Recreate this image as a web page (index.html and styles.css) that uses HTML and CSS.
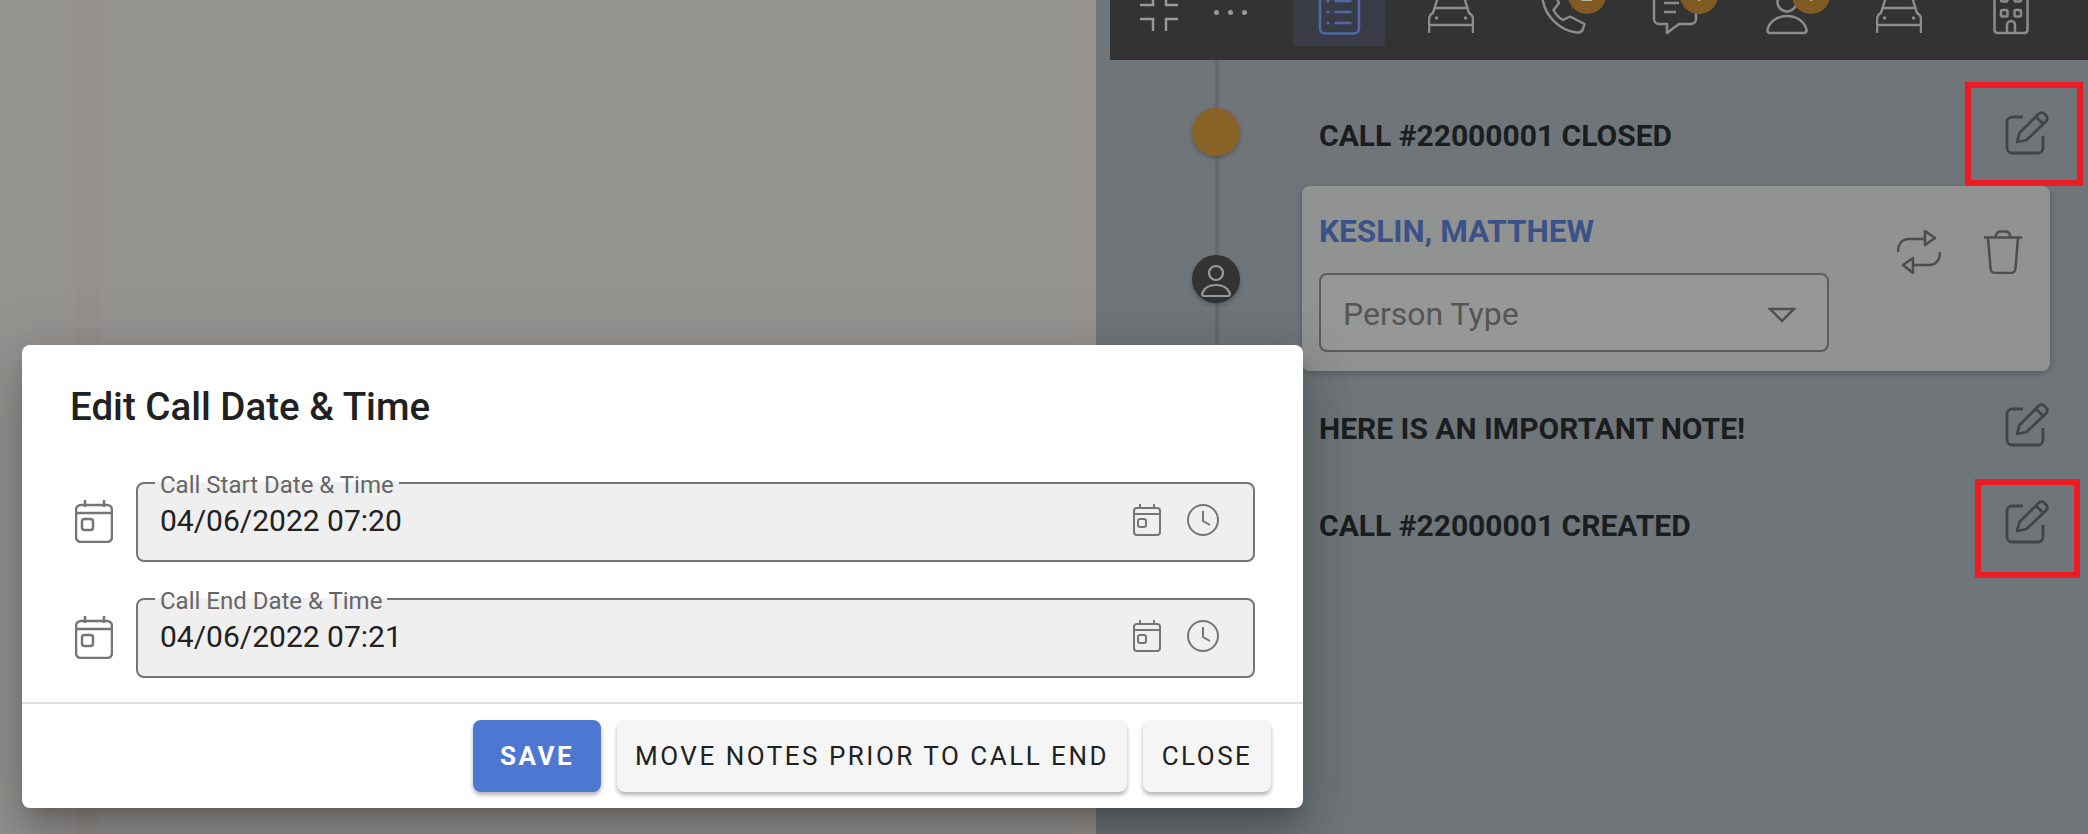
FILE: index.html
```html
<!DOCTYPE html>
<html lang="en">
<head>
  <meta charset="UTF-8" />
  <title>Edit Call Date &amp; Time</title>
  <link rel="stylesheet" href="styles.css">
</head>

<body>
  <div class="page">
    <div class="map-pane"></div>

    <div class="side-panel">
      <!-- Toolbar, scrolled so the tops of the icons are cut off -->
      <div class="toolbar">
        <svg class="tool-compress" width="38" height="48" viewBox="0 0 38 48">
          <path d="M0 5H13V0M38 5H26V0M0 19H13V31M38 19H26V31" />
        </svg>
        <div class="tool-dots"><span></span><span></span><span></span></div>
        <div class="tabs">
          <div class="tab active">
            <svg class="icon" width="46" height="48" viewBox="0 0 46 48">
              <rect x="4" y="2" width="39" height="44.5" rx="5" />
              <path d="M18.5 14H35.5M18.5 25H35.5M18.5 36H35.5" />
              <circle class="solid" cx="12" cy="14" r="1.6" />
              <circle class="solid" cx="12" cy="25" r="1.6" />
              <circle class="solid" cx="12" cy="36" r="1.6" />
            </svg>
          </div>
          <div class="tab">
            <svg class="icon" width="46" height="48" viewBox="0 0 46 48">
              <path d="M1 46V32a7 7 0 0 1 4-6L10 10a5 5 0 0 1 5-4H31a5 5 0 0 1 5 4L41 26a7 7 0 0 1 4 6V46M7 21H39M1 38H45" />
              <circle class="solid" cx="8.5" cy="31" r="1.7" />
              <circle class="solid" cx="37.5" cy="31" r="1.7" />
            </svg>
          </div>
          <div class="tab">
            <svg class="icon" width="46" height="48" viewBox="0 0 46 48">
              <path d="M10 3L5 5C2 7 2 11 3 14C6 30 20 43 36 45.5C40 46 42 45 43 42L44.5 37L30 29.5L23 33C19 31 16 28 13.5 23L19 16L13 3Z" />
            </svg>
            <span class="badge">2</span>
          </div>
          <div class="tab">
            <svg class="icon" width="46" height="48" viewBox="0 0 46 48">
              <path d="M8 2H38a6 6 0 0 1 6 6V32a5 5 0 0 1-5 5H27L15 46V37H7a5 5 0 0 1-5-5V8a6 6 0 0 1 6-6M12 16H27M12 25H24" />
            </svg>
            <span class="badge">1</span>
          </div>
          <div class="tab">
            <svg class="icon" width="46" height="48" viewBox="0 0 46 48">
              <circle cx="23" cy="15" r="9.5" />
              <path d="M6 46H40a2.500 2.500 0 0 0 2.500-3C41 35 33 29 23 29S5 35 3.500 43A2.500 2.500 0 0 0 6 46Z" />
            </svg>
            <span class="badge">1</span>
          </div>
          <div class="tab">
            <svg class="icon" width="46" height="48" viewBox="0 0 46 48">
              <path d="M1 46V32a7 7 0 0 1 4-6L10 10a5 5 0 0 1 5-4H31a5 5 0 0 1 5 4L41 26a7 7 0 0 1 4 6V46M7 21H39M1 38H45" />
              <circle class="solid" cx="8.5" cy="31" r="1.7" />
              <circle class="solid" cx="37.5" cy="31" r="1.7" />
            </svg>
          </div>
          <div class="tab">
            <svg class="icon" width="46" height="48" viewBox="0 0 46 48">
              <path d="M10 2H36a3.500 3.500 0 0 1 3.500 3.500V43a3 3 0 0 1-3 3H9.500a3 3 0 0 1-3-3V5.500A3.500 3.500 0 0 1 10 2ZM19 46V38a4 4 0 0 1 8 0V46" />
              <rect x="13" y="8" width="6.500" height="6.500" rx="1.500" />
              <rect x="26.500" y="8" width="6.500" height="6.500" rx="1.500" />
              <rect x="13" y="23" width="6.500" height="6.500" rx="1.500" />
              <rect x="26.500" y="23" width="6.500" height="6.500" rx="1.500" />
            </svg>
          </div>
        </div>
      </div>

      <!-- Call timeline -->
      <div class="timeline">
        <div class="event event-closed">
          <div class="slot"><div class="dot dot-orange"></div></div>
          <div class="event-title">CALL #22000001 CLOSED</div>
          <div class="edit-btn">
            <svg class="edit-icon" width="46" height="46" viewBox="0 0 46 46">
              <path d="M19 7H8a5 5 0 0 0-5 5V38a5 5 0 0 0 5 5H34a5 5 0 0 0 5-5V26" />
              <path d="M13 32L15.500 23L34.500 4a4 4 0 0 1 6 0L42 5.500a4 4 0 0 1 0 6L22.500 30Z" />
              <path d="M32 7L39.500 14" />
            </svg>
            <div class="marker marker-closed"></div>
          </div>
        </div>

        <div class="event event-person">
          <div class="slot">
            <div class="dot dot-dark">
              <svg width="48" height="48" viewBox="0 0 48 48">
                <circle cx="24" cy="18" r="7" />
                <path d="M12 41H36a2 2 0 0 0 1.800-2.800C36 33.500 31 30 24 30S12 33.500 10.200 38.200A2 2 0 0 0 12 41Z" />
              </svg>
            </div>
          </div>
          <div class="person-card">
            <div class="person-main">
              <div class="person-name">KESLIN, MATTHEW</div>
              <div class="person-select">
                <span>Person Type</span>
                <svg width="28" height="16" viewBox="0 0 28 16">
                  <path d="M2 2H26L14 14Z" />
                </svg>
              </div>
            </div>
            <div class="person-actions">
              <svg width="44" height="44" viewBox="0 0 44 44">
                <path d="M1 22C1 14 5 9 12 9H28M43 22C43 30 39 35 32 35H16" />
                <path d="M28 1L38 8L28 15ZM16 28L6 35L16 43Z" />
              </svg>
              <svg width="38" height="44" viewBox="0 0 38 44">
                <path d="M0 7.500H38M4 7.500L6.500 38.500a5 5 0 0 0 5 4.500H26.500a5 5 0 0 0 5-4.500L34 7.500M11 7.500L13 3a4 4 0 0 1 3-1.500H22a4 4 0 0 1 3 1.500L27 7.500" />
              </svg>
            </div>
          </div>
        </div>

        <div class="event event-note">
          <div class="slot"></div>
          <div class="event-title">HERE IS AN IMPORTANT NOTE!</div>
          <div class="edit-btn">
            <svg class="edit-icon" width="46" height="46" viewBox="0 0 46 46">
              <path d="M19 7H8a5 5 0 0 0-5 5V38a5 5 0 0 0 5 5H34a5 5 0 0 0 5-5V26" />
              <path d="M13 32L15.500 23L34.500 4a4 4 0 0 1 6 0L42 5.500a4 4 0 0 1 0 6L22.500 30Z" />
              <path d="M32 7L39.500 14" />
            </svg>
          </div>
        </div>

        <div class="event event-note">
          <div class="slot"></div>
          <div class="event-title">CALL #22000001 CREATED</div>
          <div class="edit-btn">
            <svg class="edit-icon" width="46" height="46" viewBox="0 0 46 46">
              <path d="M19 7H8a5 5 0 0 0-5 5V38a5 5 0 0 0 5 5H34a5 5 0 0 0 5-5V26" />
              <path d="M13 32L15.500 23L34.500 4a4 4 0 0 1 6 0L42 5.500a4 4 0 0 1 0 6L22.500 30Z" />
              <path d="M32 7L39.500 14" />
            </svg>
            <div class="marker marker-created"></div>
          </div>
        </div>
      </div>
    </div>

    <!-- Dialog -->
    <div class="dialog">
      <h2>Edit Call Date &amp; Time</h2>

      <div class="date-row">
        <svg class="date-icon" width="38" height="44" viewBox="0 0 38 44">
          <path d="M10 1V8M29 1V8M1 14H37" />
          <rect x="1" y="6" width="36" height="37" rx="5" />
          <rect x="7" y="20" width="11" height="11" rx="2.500" />
        </svg>
        <fieldset class="date-field">
          <legend>Call Start Date &amp; Time</legend>
          <div class="date-value">
            <span>04/06/2022 07:20</span>
            <svg class="field-icon" width="28" height="32" viewBox="0 0 28 32">
              <path d="M7 0V5M21 0V5M1 10H27" />
              <rect x="1" y="4" width="26" height="27" rx="3" />
              <rect x="5" y="15" width="8" height="8" rx="2" />
            </svg>
            <svg class="field-icon" width="32" height="32" viewBox="0 0 32 32">
              <circle cx="16" cy="16" r="15" />
              <path d="M16 7V17L23 21" />
            </svg>
          </div>
        </fieldset>
      </div>

      <div class="date-row">
        <svg class="date-icon" width="38" height="44" viewBox="0 0 38 44">
          <path d="M10 1V8M29 1V8M1 14H37" />
          <rect x="1" y="6" width="36" height="37" rx="5" />
          <rect x="7" y="20" width="11" height="11" rx="2.500" />
        </svg>
        <fieldset class="date-field">
          <legend>Call End Date &amp; Time</legend>
          <div class="date-value">
            <span>04/06/2022 07:21</span>
            <svg class="field-icon" width="28" height="32" viewBox="0 0 28 32">
              <path d="M7 0V5M21 0V5M1 10H27" />
              <rect x="1" y="4" width="26" height="27" rx="3" />
              <rect x="5" y="15" width="8" height="8" rx="2" />
            </svg>
            <svg class="field-icon" width="32" height="32" viewBox="0 0 32 32">
              <circle cx="16" cy="16" r="15" />
              <path d="M16 7V17L23 21" />
            </svg>
          </div>
        </fieldset>
      </div>

      <div class="dialog-actions">
        <button class="btn btn-save">SAVE</button>
        <button class="btn">MOVE NOTES PRIOR TO CALL END</button>
        <button class="btn">CLOSE</button>
      </div>
    </div>
  </div>
</body>
</html>
```

FILE: styles.css
```css
html, body {
  margin: 0;
  height: 100%;
  overflow: hidden;
}

body {
  font-family: 'Roboto', 'Liberation Sans', sans-serif;
  color: #212121;
}

.page {
  position: relative;
  display: flex;
  height: 834px;
}

.map-pane {
  width: 1096px;
  flex-shrink: 0;
  background:
    linear-gradient(90deg, transparent 76px, #94908d 76px, #94908d 100px, transparent 100px),
    linear-gradient(90deg, transparent 1072px, #96928f 1072px),
    #959390;
}

.side-panel {
  position: relative;
  flex: 1;
  background: #6f7579;
}

.side-panel::before {
  content: "";
  position: absolute;
  left: 119px;
  top: 60px;
  width: 4px;
  height: 560px;
  background: #646a6e;
}

/* toolbar */
.toolbar {
  position: relative;
  display: flex;
  align-items: flex-start;
  height: 60px;
  margin-left: 14px;
  padding-left: 30px;
  background: #333;
  overflow: hidden;
}

.tool-compress {
  flex-shrink: 0;
  fill: none;
  stroke: #999;
  stroke-width: 2.5;
}

.tool-dots {
  display: flex;
  gap: 9px;
  margin: 9.5px 0 0 36px;
  width: 36px;
  flex-shrink: 0;
}

.tool-dots span {
  width: 5px;
  height: 5px;
  border-radius: 50%;
  background: #999;
}

.tabs {
  display: flex;
  gap: 20px;
  margin-left: 42.5px;
}

.tab {
  position: relative;
  display: flex;
  justify-content: center;
  align-items: flex-end;
  width: 92px;
  height: 46px;
  padding-bottom: 11px;
  box-sizing: border-box;
}

.tab.active {
  background: #393c47;
}

.icon {
  flex-shrink: 0;
  fill: none;
  stroke: #8c8c8c;
  stroke-width: 2.5;
  stroke-linejoin: round;
}

.icon .solid {
  fill: #8c8c8c;
  stroke: none;
}

.tab.active .icon {
  stroke: #4f6aa6;
}

.tab.active .icon .solid {
  fill: #4f6aa6;
  stroke: none;
}

.badge {
  position: absolute;
  top: -24px;
  left: 51px;
  width: 38px;
  height: 38px;
  border-radius: 50%;
  background: #7f5c24;
  color: #bdb6a8;
  font-size: 22px;
  line-height: 36px;
  text-align: center;
}

/* timeline */
.timeline {
  position: relative;
  padding: 0 38px 0 96px;
}

.event {
  display: flex;
  align-items: center;
}

.event-closed {
  height: 102px;
  padding-top: 24px;
}

.event-person {
  margin-bottom: 9px;
}

.event-note {
  height: 97px;
}

.slot {
  flex-shrink: 0;
  width: 48px;
  margin-right: 62px;
}

.dot {
  width: 48px;
  height: 48px;
  border-radius: 50%;
  box-shadow: 0 2px 4px rgba(0, 0, 0, 0.25);
}

.event-closed .dot {
  margin-top: -6px;
}

.dot-orange {
  background: #8a6328;
}

.dot-dark {
  background: #333;
}

.dot-dark svg {
  display: block;
  fill: none;
  stroke: #9a9a9a;
  stroke-width: 2.2;
}

.event-title {
  flex: 1;
  padding-left: 17px;
  font-size: 30px;
  font-weight: 700;
  color: #1b1d1f;
}

.edit-btn {
  position: relative;
  width: 46px;
  height: 46px;
  flex-shrink: 0;
}

.edit-icon {
  display: block;
  fill: none;
  stroke: #424548;
  stroke-width: 2.8;
  stroke-linejoin: round;
}

.event-closed .edit-btn {
  margin-top: -4px;
}

.event-note .edit-btn {
  margin-top: -8px;
}

.marker {
  position: absolute;
  border: 6px solid #ed1c24;
  box-sizing: border-box;
}

.marker-closed {
  left: -39px;
  top: -28px;
  width: 118px;
  height: 104px;
}

.marker-created {
  left: -29px;
  top: -20px;
  width: 105px;
  height: 99px;
}

.person-card {
  flex: 1;
  display: flex;
  justify-content: space-between;
  height: 185px;
  padding: 28px 28px 0 17px;
  box-sizing: border-box;
  background: #919392;
  border-radius: 8px;
  box-shadow: 0 2px 6px rgba(0, 0, 0, 0.25);
}

.person-name {
  font-size: 31.5px;
  font-weight: 700;
  line-height: 36px;
  color: #3b5289;
}

.person-select {
  display: flex;
  align-items: center;
  justify-content: space-between;
  width: 510px;
  height: 79px;
  margin-top: 23px;
  padding: 3px 31px 0 22px;
  box-sizing: border-box;
  border: 2px solid #5c5c5c;
  border-radius: 8px;
  background: #979797;
  font-size: 32px;
  color: #555;
}

.person-select svg {
  margin-top: 2px;
  fill: none;
  stroke: #505050;
  stroke-width: 2.5;
}

.person-actions {
  display: flex;
  gap: 43px;
  padding-top: 16px;
}

.person-actions svg {
  fill: none;
  stroke: #4c4e4e;
  stroke-width: 2.5;
  stroke-linejoin: round;
}

/* dialog */
.dialog {
  position: absolute;
  left: 22px;
  top: 345px;
  width: 1281px;
  height: 463px;
  box-sizing: border-box;
  background: #fff;
  border-radius: 8px;
  box-shadow: 0 14px 20px -9px rgba(0, 0, 0, 0.2), 0 32px 50px 4px rgba(0, 0, 0, 0.14), 0 12px 60px 10px rgba(0, 0, 0, 0.12);
}

.dialog h2 {
  margin: 0 0 29px;
  padding: 40px 0 0 48px;
  font-size: 38.5px;
  font-weight: 500;
  line-height: 44px;
}

.date-row {
  display: flex;
  align-items: center;
  gap: 23px;
  margin: 0 48px 0 53px;
  height: 116px;
}

.date-icon {
  flex-shrink: 0;
  fill: none;
  stroke: #757575;
  stroke-width: 2.5;
  margin-top: 10px;
}

.date-field {
  flex: 1;
  min-width: 0;
  height: 91px;
  margin: 0;
  padding: 0 34px 0 22px;
  box-sizing: border-box;
  border: 2px solid #757575;
  border-radius: 8px;
  background: #efefef;
}

.date-field legend {
  position: relative;
  top: 2px;
  margin-left: -5px;
  padding: 0 5px;
  font-size: 24px;
  line-height: 24px;
  color: #666;
}

.date-value {
  display: flex;
  align-items: center;
  gap: 26px;
  height: 50px;
  font-size: 30px;
}

.date-value span {
  flex: 1;
  padding-top: 2px;
}

.field-icon {
  fill: none;
  stroke: #757575;
  stroke-width: 2;
}

.dialog-actions {
  display: flex;
  justify-content: flex-end;
  gap: 16px;
  margin-top: 12px;
  padding: 16px 32px;
  border-top: 2px solid #e0e0e0;
}

.btn {
  min-width: 128px;
  height: 72px;
  padding: 0 18px;
  border: none;
  border-radius: 8px;
  background: #f5f5f5;
  font-family: inherit;
  font-size: 26px;
  font-weight: 400;
  letter-spacing: 2.5px;
  color: #212121;
  box-shadow: 0 3px 4px rgba(0, 0, 0, 0.3);
}

.btn-save {
  background: #4d77d1;
  color: #fff;
  font-weight: 700;
  letter-spacing: 2.5px;
}
```
